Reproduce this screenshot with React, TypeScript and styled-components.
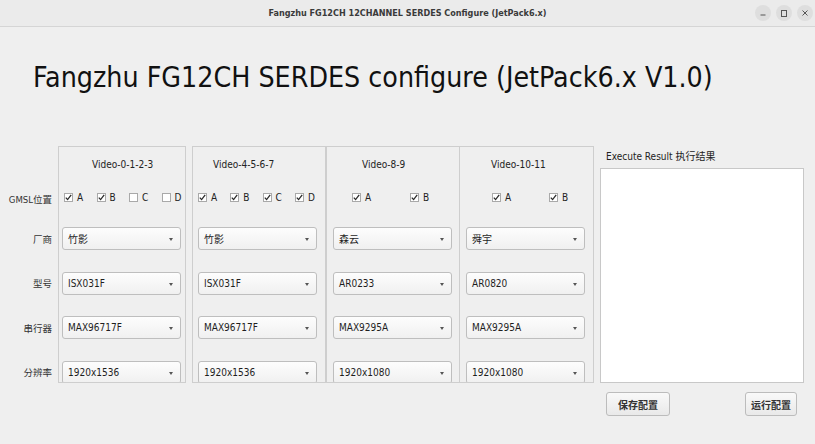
import * as React from 'react';
import styled, { createGlobalStyle } from 'styled-components';

const GlobalStyle = createGlobalStyle`
  html, body {
    margin: 0;
    padding: 0;
    background: #efefef;
  }
  #root {
    width: 815px;
    height: 444px;
    overflow: hidden;
  }
`;

const UI_FONT = `'DejaVu Sans Condensed', 'DejaVu Sans', 'Noto Sans CJK SC', sans-serif`;

const Window = styled.div`
  width: 815px;
  height: 444px;
  display: flex;
  flex-direction: column;
  background: #efefef;
  font-family: ${UI_FONT};
  color: #2e2e2e;
`;

// 窗口标题栏
const TitleBar = styled.div`
  display: grid;
  grid-template-columns: 1fr auto 1fr;
  align-items: center;
  height: 26px;
  flex-shrink: 0;
  background: #ebebeb;
  border-bottom: 1px solid #d5d5d5;
`;

const TitleText = styled.span`
  grid-column: 2;
  font-size: 9px;
  font-weight: bold;
  color: #3a3a3a;
`;

const WinControls = styled.div`
  grid-column: 3;
  justify-self: end;
  display: flex;
  gap: 5px;
  padding-right: 2px;
`;

const WinButton = styled.span`
  display: flex;
  justify-content: center;
  align-items: center;
  width: 16px;
  height: 16px;
  border-radius: 50%;
  background: #dedede;
  color: #555;
`;
//-----------------------------------------------------------------

const Heading = styled.div`
  height: 119px;
  flex-shrink: 0;
  box-sizing: border-box;
  padding: 37px 0 0 33px;
  font-size: 28.3px;
  line-height: 1;
  color: #111;
  white-space: nowrap;
`;

const Body = styled.div`
  display: flex;
  align-items: flex-start;
`;

// 左侧行标签
const LabelColumn = styled.div`
  display: flex;
  flex-direction: column;
  width: 58px;
  box-sizing: border-box;
  padding-right: 6px;
  text-align: right;
  font-size: 9.5px;
  color: #333;
`;

const Spacer = styled.div<{ h: number }>`
  height: ${p => p.h}px;
  flex-shrink: 0;
`;

const RowLabel = styled.div<{ h?: number }>`
  display: flex;
  justify-content: flex-end;
  align-items: center;
  height: ${p => p.h ?? 23}px;
  flex-shrink: 0;
`;

// 视频通道分组
const GroupBox = styled.div<{ w: number; ml: number; pad: number }>`
  display: flex;
  flex-direction: column;
  width: ${p => p.w}px;
  height: 237px;
  margin-left: ${p => p.ml}px;
  box-sizing: border-box;
  padding-left: ${p => p.pad}px;
  border: 1px solid #cecece;
  overflow: hidden;
  flex-shrink: 0;
`;

const GroupHeader = styled.div<{ offset: number }>`
  display: flex;
  align-items: center;
  height: 35px;
  flex-shrink: 0;
  margin-left: ${p => p.offset}px;
  font-size: 10px;
  color: #222;
`;

const CheckRow = styled.div<{ pad: number; col: number }>`
  display: grid;
  grid-template-columns: repeat(4, ${p => p.col}px);
  align-items: center;
  height: 30px;
  flex-shrink: 0;
  padding-left: ${p => p.pad}px;
`;

const CheckItem = styled.label`
  display: flex;
  align-items: center;
  gap: 4px;
  font-size: 10px;
  color: #222;
`;

const CheckBox = styled.span`
  display: flex;
  justify-content: center;
  align-items: center;
  width: 9px;
  height: 9px;
  background: #fff;
  border: 1px solid #a9a9a9;
  box-sizing: border-box;
`;

const ComboList = styled.div`
  display: flex;
  flex-direction: column;
  gap: 21.5px;
`;

const Combo = styled.div`
  position: relative;
  display: flex;
  align-items: center;
  width: 119px;
  height: 23px;
  flex-shrink: 0;
  box-sizing: border-box;
  padding-left: 5px;
  border: 1px solid #bebebe;
  border-radius: 3px;
  background: linear-gradient(#fdfdfd, #f0f0f0);
  font-size: 10px;
  color: #1e1e1e;

  &::after {
    content: '';
    position: absolute;
    right: 7px;
    top: 10px;
    border-left: 2.5px solid transparent;
    border-right: 2.5px solid transparent;
    border-top: 3px solid #555;
  }
`;

// 右侧执行结果
const ResultPanel = styled.div`
  display: flex;
  flex-direction: column;
  width: 204px;
  margin-left: 6px;
`;

const ResultLabel = styled.div`
  display: flex;
  align-items: center;
  height: 22px;
  box-sizing: border-box;
  padding: 0 0 4px 6px;
  font-size: 10px;
  color: #222;
`;

const ResultBox = styled.div`
  height: 215px;
  background: #fff;
  border: 1px solid #c8c8c8;
  box-sizing: border-box;
`;

const ButtonRow = styled.div`
  display: flex;
  justify-content: space-between;
  margin-top: 9px;
  padding: 0 7px 0 6px;
`;

const Button = styled.button<{ w: number }>`
  width: ${p => p.w}px;
  height: 24px;
  padding: 0;
  border: 1px solid #bcbcbc;
  border-radius: 3px;
  background: linear-gradient(#f9f9f9, #e9e9e9);
  font-family: ${UI_FONT};
  font-size: 10px;
  font-weight: bold;
  color: #333;
`;
//-----------------------------------------------------------------

type Group = {
  title: string;
  w: number;
  ml: number;
  pad: number;
  offset: number;
  checkPad: number;
  col: number;
  checks: [string, boolean][];
  values: string[];
};

const groups: Group[] = [
  {
    title: 'Video-0-1-2-3',
    w: 128,
    ml: 0,
    pad: 3,
    offset: 30,
    checkPad: 2,
    col: 32.5,
    checks: [['A', true], ['B', true], ['C', false], ['D', false]],
    values: ['竹影', 'ISX031F', 'MAX96717F', '1920x1536'],
  },
  {
    title: 'Video-4-5-6-7',
    w: 134,
    ml: 6,
    pad: 5,
    offset: 15,
    checkPad: 0,
    col: 32.3,
    checks: [['A', true], ['B', true], ['C', true], ['D', true]],
    values: ['竹影', 'ISX031F', 'MAX96717F', '1920x1536'],
  },
  {
    title: 'Video-8-9',
    w: 134,
    ml: 0,
    pad: 6,
    offset: 29,
    checkPad: 19,
    col: 58,
    checks: [['A', true], ['B', true]],
    values: ['森云', 'AR0233', 'MAX9295A', '1920x1080'],
  },
  {
    title: 'Video-10-11',
    w: 135,
    ml: -1,
    pad: 6,
    offset: 25,
    checkPad: 26,
    col: 57,
    checks: [['A', true], ['B', true]],
    values: ['舜宇', 'AR0820', 'MAX9295A', '1920x1080'],
  },
];

function CheckMark() {
  return (
    <svg width="7" height="7" viewBox="0 0 7 7">
      <path d="M0.8 3.6 L2.6 5.6 L6.2 0.9" fill="none" stroke="#2a2a2a" strokeWidth="1.3" />
    </svg>
  );
}

export default function App() {
  const rowNames = ['厂商', '型号', '串行器', '分辨率'];

  return (
    <Window>
      <GlobalStyle />
      <TitleBar>
        <TitleText>Fangzhu FG12CH 12CHANNEL SERDES Configure (JetPack6.x)</TitleText>
        <WinControls>
          <WinButton>
            <svg width="6" height="6" viewBox="0 0 6 6">
              <path d="M0.5 5 H5.5" stroke="#555" strokeWidth="1" />
            </svg>
          </WinButton>
          <WinButton>
            <svg width="6" height="7" viewBox="0 0 6 7">
              <rect x="0.5" y="0.5" width="5" height="6" fill="none" stroke="#555" strokeWidth="1" />
            </svg>
          </WinButton>
          <WinButton>
            <svg width="6" height="6" viewBox="0 0 6 6">
              <path d="M0.5 0.5 L5.5 5.5 M5.5 0.5 L0.5 5.5" stroke="#555" strokeWidth="1" />
            </svg>
          </WinButton>
        </WinControls>
      </TitleBar>

      <Heading>Fangzhu FG12CH SERDES configure (JetPack6.x V1.0)</Heading>

      <Body>
        <LabelColumn>
          <Spacer h={36} />
          <RowLabel h={34}>GMSL位置</RowLabel>
          <Spacer h={11} />
          <ComboList>
            {rowNames.map(n => (
              <RowLabel key={n}>{n}</RowLabel>
            ))}
          </ComboList>
        </LabelColumn>

        {groups.map(g => (
          <GroupBox key={g.title} w={g.w} ml={g.ml} pad={g.pad}>
            <GroupHeader offset={g.offset}>{g.title}</GroupHeader>
            <CheckRow pad={g.checkPad} col={g.col}>
              {g.checks.map(([name, on]) => (
                <CheckItem key={name}>
                  <CheckBox>{on && <CheckMark />}</CheckBox>
                  {name}
                </CheckItem>
              ))}
            </CheckRow>
            <Spacer h={15} />
            <ComboList>
              {g.values.map((v, i) => (
                <Combo key={i}>{v}</Combo>
              ))}
            </ComboList>
          </GroupBox>
        ))}

        <ResultPanel>
          <ResultLabel>Execute Result 执行结果</ResultLabel>
          <ResultBox />
          <ButtonRow>
            <Button w={64}>保存配置</Button>
            <Button w={52}>运行配置</Button>
          </ButtonRow>
        </ResultPanel>
      </Body>
    </Window>
  );
}
